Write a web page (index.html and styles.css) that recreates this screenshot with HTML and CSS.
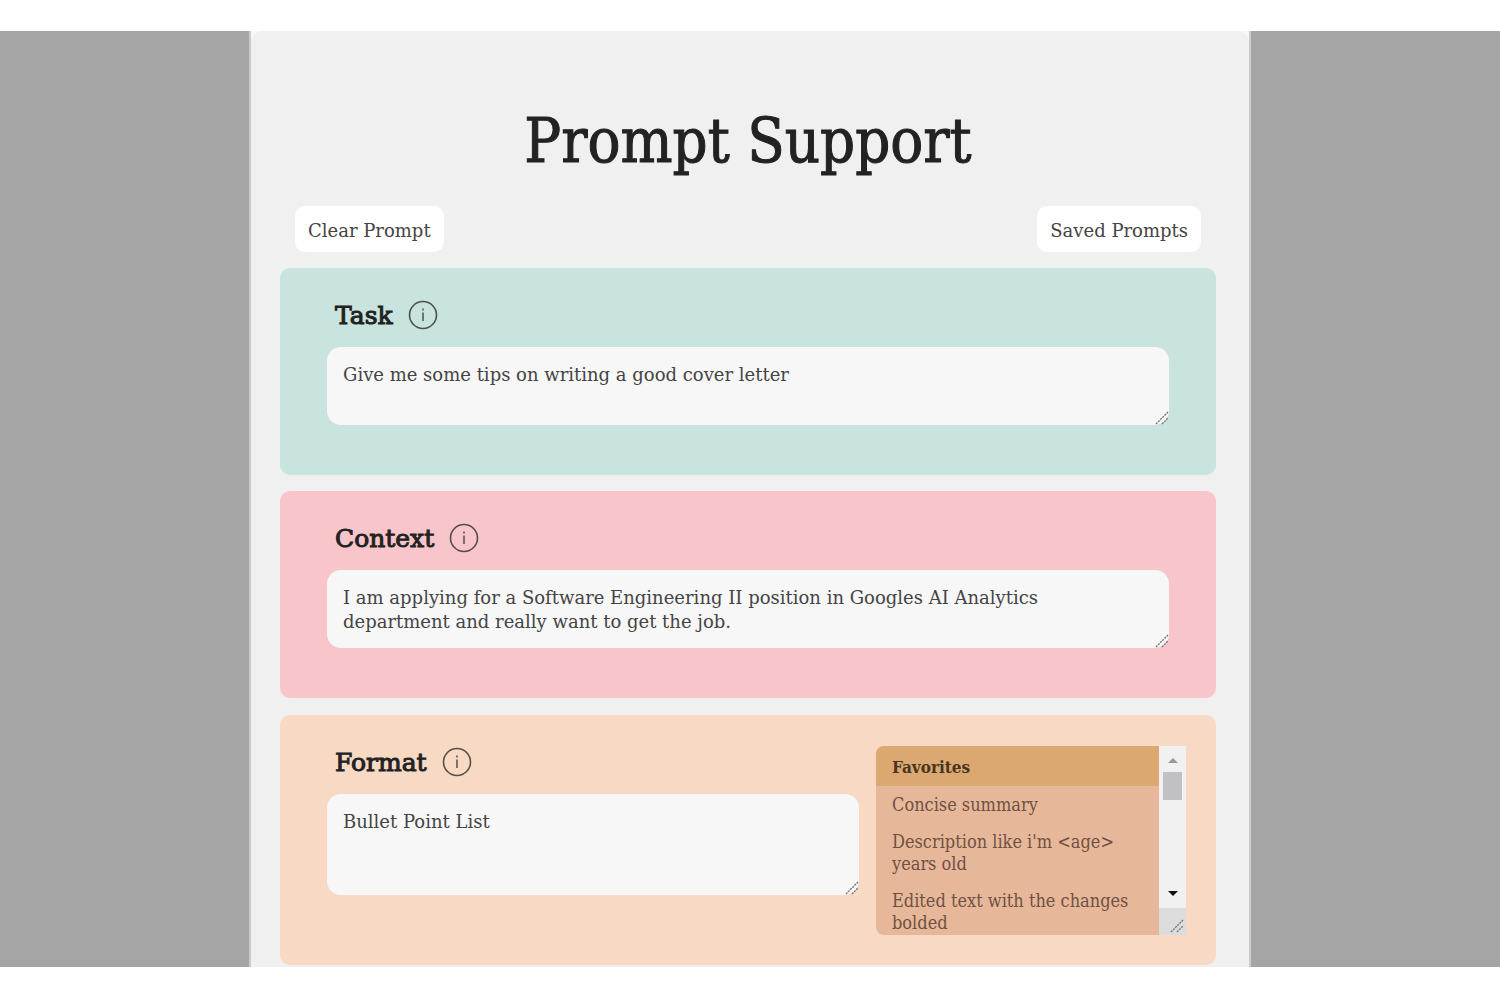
FILE: index.html
```html
<!DOCTYPE html>
<html lang="en">
<head>
<meta charset="utf-8">
<title>Prompt Support</title>
<link rel="stylesheet" href="styles.css">
</head>
<body>
<svg class="symbols" aria-hidden="true">
  <symbol id="info" viewBox="0 0 30 30">
    <circle cx="15" cy="15" r="13.5" fill="none" stroke="currentColor" stroke-width="1.6"/>
    <path d="M15 12.5V21M15 8.5V10.5" fill="none" stroke="currentColor" stroke-width="1.5"/>
  </symbol>
  <symbol id="grip" viewBox="0 0 14 14">
    <path d="M1 13L13 1M7 13L13 7" fill="none" stroke="currentColor" stroke-width="1.4" stroke-dasharray="2 1"/>
  </symbol>
</svg>
<div class="backdrop">
  <main class="panel">
    <div class="sheet">
      <h1 class="title">Prompt Support</h1>
      <div class="actions">
        <button class="action" type="button">Clear Prompt</button>
        <button class="action" type="button">Saved Prompts</button>
      </div>
      <section class="card card-task">
        <div class="field">
          <div class="heading">
            <label for="task">Task</label>
            <button class="info" type="button" aria-label="About task"><svg><use href="#info"/></svg></button>
          </div>
          <div class="box">
            <textarea id="task">Give me some tips on writing a good cover letter</textarea>
            <svg class="grip"><use href="#grip"/></svg>
          </div>
        </div>
      </section>
      <section class="card card-context">
        <div class="field">
          <div class="heading">
            <label for="context">Context</label>
            <button class="info" type="button" aria-label="About context"><svg><use href="#info"/></svg></button>
          </div>
          <div class="box">
            <textarea id="context">I am applying for a Software Engineering II position in Googles AI Analytics department and really want to get the job.</textarea>
            <svg class="grip"><use href="#grip"/></svg>
          </div>
        </div>
      </section>
      <section class="card card-format">
        <div class="field">
          <div class="heading">
            <label for="format">Format</label>
            <button class="info" type="button" aria-label="About format"><svg><use href="#info"/></svg></button>
          </div>
          <div class="box box-tall">
            <textarea id="format">Bullet Point List</textarea>
            <svg class="grip"><use href="#grip"/></svg>
          </div>
        </div>
        <div class="picker">
          <div class="options">
            <h2 class="group">Favorites</h2>
            <ul class="list">
              <li>Concise summary</li>
              <li>Description like i'm &lt;age&gt; years old</li>
              <li>Edited text with the changes bolded</li>
            </ul>
          </div>
          <div class="scrollbar" aria-hidden="true">
            <svg class="arrow arrow-up" viewBox="0 0 10 5"><path d="M0 5L5 0L10 5Z" fill="currentColor"/></svg>
            <div class="thumb"></div>
            <svg class="arrow arrow-down" viewBox="0 0 10 5"><path d="M0 0H10L5 5Z" fill="currentColor"/></svg>
            <div class="corner"><svg><use href="#grip"/></svg></div>
          </div>
        </div>
      </section>
    </div>
  </main>
</div>
</body>
</html>
```
FILE: styles.css
```css
* { box-sizing: border-box; }

body {
  margin: 0;
  background: #fff;
  color: #222;
  font-family: "DejaVu Serif", serif;
}

button, textarea { font: inherit; color: inherit; }

.symbols { display: none; }

.backdrop {
  margin: 31px 0 32px;
  background: #a5a5a5;
}

.panel {
  width: 67%;
  max-width: 1002px;
  margin: 0 auto;
  border: solid #cbcbcb;
  border-width: 0 2px;
  background: #f7f7f7;
}

.sheet {
  padding: 74px 33px 2px 29px;
  border-radius: 12px 12px 0 0;
  background: #f0f0f0;
}

.title {
  margin: 0;
  font-family: "DejaVu Serif Condensed", "DejaVu Serif", serif;
  font-size: 61px;
  line-height: 72px;
  font-weight: 400;
  text-align: center;
  -webkit-text-stroke: 1px currentColor;
}

.actions {
  display: flex;
  justify-content: space-between;
  margin: 29px 15px 16px;
}

.action {
  height: 46px;
  padding: 2px 13px 0;
  border: 0;
  border-radius: 10px;
  background: #fff;
  color: #444;
  font-size: 18px;
}

.card {
  display: flex;
  gap: 17px;
  min-height: 207px;
  margin-bottom: 16px;
  padding: 31px 47px;
  border-radius: 10px;
}

.card-task { background: #c9e3de; }
.card-context { background: #f8c6ca; }
.card-format {
  min-height: 250px;
  margin: 17px 0 0;
  padding-right: 30px;
  padding-bottom: 30px;
  background: #f7d9c4;
}

.field { flex: 1; }

.heading {
  display: flex;
  align-items: center;
  gap: 15px;
  height: 32px;
  margin-bottom: 16px;
  padding-left: 8px;
  font-size: 25px;
}

.heading label { -webkit-text-stroke: 1px currentColor; }

.info {
  width: 30px;
  height: 30px;
  padding: 0;
  border: 0;
  background: none;
  opacity: 0.75;
}

.info svg { display: block; width: 30px; height: 30px; }

.box { position: relative; height: 78px; }
.box-tall { height: 101px; }

.box textarea {
  display: block;
  width: 100%;
  height: 100%;
  padding: 16px 24px 12px 16px;
  border: 0;
  border-radius: 14px;
  background: #f7f7f7;
  color: #444;
  font-size: 18px;
  line-height: 24px;
  resize: none;
  overflow: hidden;
}

.grip {
  position: absolute;
  right: 0;
  bottom: 0;
  width: 14px;
  height: 14px;
  color: #777;
}

.picker {
  display: flex;
  width: 310px;
  height: 189px;
}

.options {
  flex: 1;
  overflow: hidden;
  border-radius: 8px 0 0 8px;
  background: #e6b899;
  color: #705044;
  font-family: "DejaVu Serif Condensed", "DejaVu Serif", serif;
  font-size: 18px;
  line-height: 22px;
}

.group {
  margin: 0;
  padding: 10px 16px 8px;
  background: #dba871;
  color: #4a3420;
  font-size: 17px;
  font-weight: 700;
}

.list { margin: 0; padding: 0; list-style: none; }
.list li { padding: 8px 16px 7px; }

.scrollbar {
  display: flex;
  flex-direction: column;
  align-items: center;
  width: 27px;
  background: #f1f1f1;
}

.arrow { width: 10px; height: 5px; }
.arrow-up { margin: 12px 0 9px; color: #999; }
.arrow-down { margin: auto 0 12px; color: #111; }

.thumb { width: 19px; height: 28px; background: #c1c1c3; }

.corner {
  display: flex;
  align-items: flex-end;
  justify-content: flex-end;
  width: 100%;
  height: 27px;
  padding: 2px;
  background: #dcdcdc;
  color: #777;
}

.corner svg { width: 14px; height: 14px; }
```
